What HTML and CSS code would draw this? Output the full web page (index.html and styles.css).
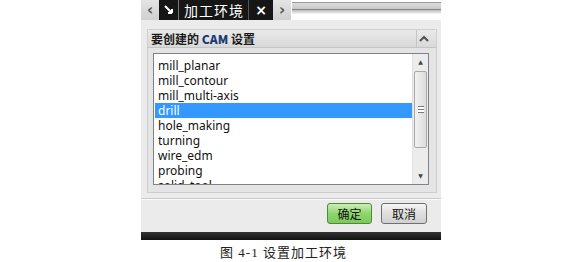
FILE: index.html
```html
<!DOCTYPE html>
<html lang="zh-CN">
<head>
    <meta charset="UTF-8">
    <meta name="viewport" content="width=device-width, initial-scale=1.0">
    <title>设置加工环境</title>
    <link rel="stylesheet" href="styles.css">
</head>
<body>

<div class="window">
    <div class="tabbar">
        <div class="nav-btn">&lsaquo;</div>
        <div class="tab">
            <div class="tab-icon">
                <svg width="10" height="10" viewBox="0 0 10 10">
                    <path d="M1 1 L8 8 M8 8 L8 4 M8 8 L4 8" stroke="#fff" stroke-width="2" fill="none"/>
                </svg>
            </div>
            <div class="tab-title">加工环境</div>
            <div class="tab-close">&times;</div>
        </div>
        <div class="nav-btn">&rsaquo;</div>
        <div class="rails"></div>
    </div>

    <div class="panel">
        <div class="section-head">
            <span class="section-title">要创建的 <b class="cam">CAM</b> 设置</span>
            <span class="collapse">
                <svg width="10" height="7" viewBox="0 0 10 7">
                    <path d="M1 6 L5 2 L9 6" stroke="#555" stroke-width="2.2" fill="none"/>
                </svg>
            </span>
        </div>
        <div class="group">
            <div class="listbox">
                <ul class="items">
                    <li>mill_planar</li>
                    <li>mill_contour</li>
                    <li>mill_multi-axis</li>
                    <li class="selected">drill</li>
                    <li>hole_making</li>
                    <li>turning</li>
                    <li>wire_edm</li>
                    <li>probing</li>
                    <li>solid_tool</li>
                </ul>
                <div class="scrollbar">
                    <div class="arrow">&#9650;</div>
                    <div class="thumb"><span class="grip"></span></div>
                    <div class="track"></div>
                    <div class="arrow">&#9660;</div>
                </div>
            </div>
        </div>
        <div class="divider"></div>
        <div class="actions">
            <button class="btn btn-ok">确定</button>
            <button class="btn">取消</button>
        </div>
    </div>
    <div class="bottom-bar"></div>
</div>

<p class="caption">图 4-1 设置加工环境</p>

</body>
</html>
```

FILE: styles.css
```css
body {
    margin: 0;
    width: 567px;
    background: #fff;
    font-family: "Noto Sans", "Noto Sans CJK SC", sans-serif;
}

.window {
    margin-left: 141px;
    width: 300px;
}

/* top tab strip */
.tabbar {
    display: flex;
    height: 20px;
    background: #fff;
}

.nav-btn {
    width: 18px;
    background: linear-gradient(#e4e4e4, #d0d0d0);
    color: #555;
    font: bold 15px/20px "DejaVu Sans", sans-serif;
    text-align: center;
}

.tab {
    display: flex;
    width: 114px;
    background: #161616;
    color: #fff;
}

.tab-icon {
    width: 19px;
    display: flex;
    align-items: center;
    justify-content: center;
    border-right: 1px solid #777;
}

.tab-title {
    padding: 0 4px 0 5px;
    font: 14px/20px "Noto Sans CJK SC", sans-serif;
    letter-spacing: 1px;
    border-right: 1px solid #555;
}

.tab-close {
    flex: 1;
    text-align: center;
    font: bold 14px/20px "DejaVu Sans", sans-serif;
}

.rails {
    flex: 1;
    margin-left: 1px;
    background: linear-gradient(#fff 0, #fff 2px, #999 2px, #999 3px, #ddd 3px, #c8c8c8 9px, #888 9px, #888 10px, #bbb 10px, #e6e6e6 13px, #fff 14px);
}

/* main panel */
.panel {
    height: 212px;
    background: #ebebeb;
    padding-top: 9px;
    box-sizing: border-box;
}

.section-head {
    display: flex;
    align-items: center;
    justify-content: space-between;
    height: 19px;
    margin: 0 4px 0 6px;
    background: linear-gradient(#e9e9e9, #d9d9d9);
    border: 1px solid #d0d0d0;
    border-bottom-color: #c4c4c4;
    box-sizing: border-box;
}

.section-title {
    padding-left: 3px;
    font: bold 12px/17px "Noto Sans CJK SC", sans-serif;
    color: #1a1a1a;
}

.cam {
    color: #1d3b73;
}

.collapse {
    width: 14px;
    height: 17px;
    margin-right: 5px;
    display: flex;
    align-items: center;
    justify-content: center;
    border-left: 1px solid #c4c4c4;
}

.group {
    height: 145px;
    margin: 0 4px 0 6px;
    padding: 5px 7px 0 5px;
    border: 1px solid #cdcdcd;
    border-top: none;
    background: #e4e4e4;
    box-sizing: border-box;
}

.listbox {
    display: flex;
    height: 132px;
    background: #fff;
    border: 1px solid #7f8288;
    box-sizing: border-box;
    overflow: hidden;
}

.items {
    flex: 1;
    list-style: none;
    margin: 0;
    padding: 4px 0 0 1px;
}

.items li {
    height: 15px;
    padding-left: 3px;
    font: 12px/15px "Noto Sans", sans-serif;
    color: #111;
}

.items li.selected {
    background: #3399ff;
    color: #fff;
}

.scrollbar {
    width: 15px;
    display: flex;
    flex-direction: column;
    background: #ececec;
    border-left: 1px solid #e0e0e0;
}

.arrow {
    height: 16px;
    font: 6px/16px "DejaVu Sans", sans-serif;
    color: #444;
    text-align: center;
}

.thumb {
    height: 75px;
    margin: 1px 1px 0;
    border: 1px solid #a8a8a8;
    border-radius: 2px;
    background: linear-gradient(90deg, #f2f2f2, #dcdcdc);
    display: flex;
    align-items: center;
    justify-content: center;
}

.grip {
    width: 6px;
    height: 5px;
    border-top: 1px solid #777;
    border-bottom: 1px solid #777;
    background: linear-gradient(#fff 2px, #777 2px, #777 3px, #fff 3px);
}

.track {
    flex: 1;
}

.divider {
    margin-top: 5px;
    height: 1px;
    background: #c9c9c9;
    border-bottom: 1px solid #fafafa;
}

.actions {
    display: flex;
    justify-content: flex-end;
    gap: 9px;
    padding: 3px 14px 0 0;
}

.btn {
    width: 46px;
    height: 21px;
    padding: 0;
    border: 1px solid #707070;
    border-radius: 3px;
    background: linear-gradient(#f6f6f6, #dedede 50%, #d0d0d0);
    font: 12px/19px "Noto Sans CJK SC", sans-serif;
    color: #111;
}

.btn-ok {
    width: 45px;
    border-color: #4d8a3a;
    background: linear-gradient(#c8f0b4, #8fd56f 50%, #7cc95a);
}

.bottom-bar {
    height: 8px;
    background: linear-gradient(#333, #111);
}

.caption {
    margin: 5px 0 0;
    text-align: center;
    font: 13px/16px "Liberation Serif", "Noto Sans CJK SC", serif;
    letter-spacing: 1px;
    color: #222;
}
```
